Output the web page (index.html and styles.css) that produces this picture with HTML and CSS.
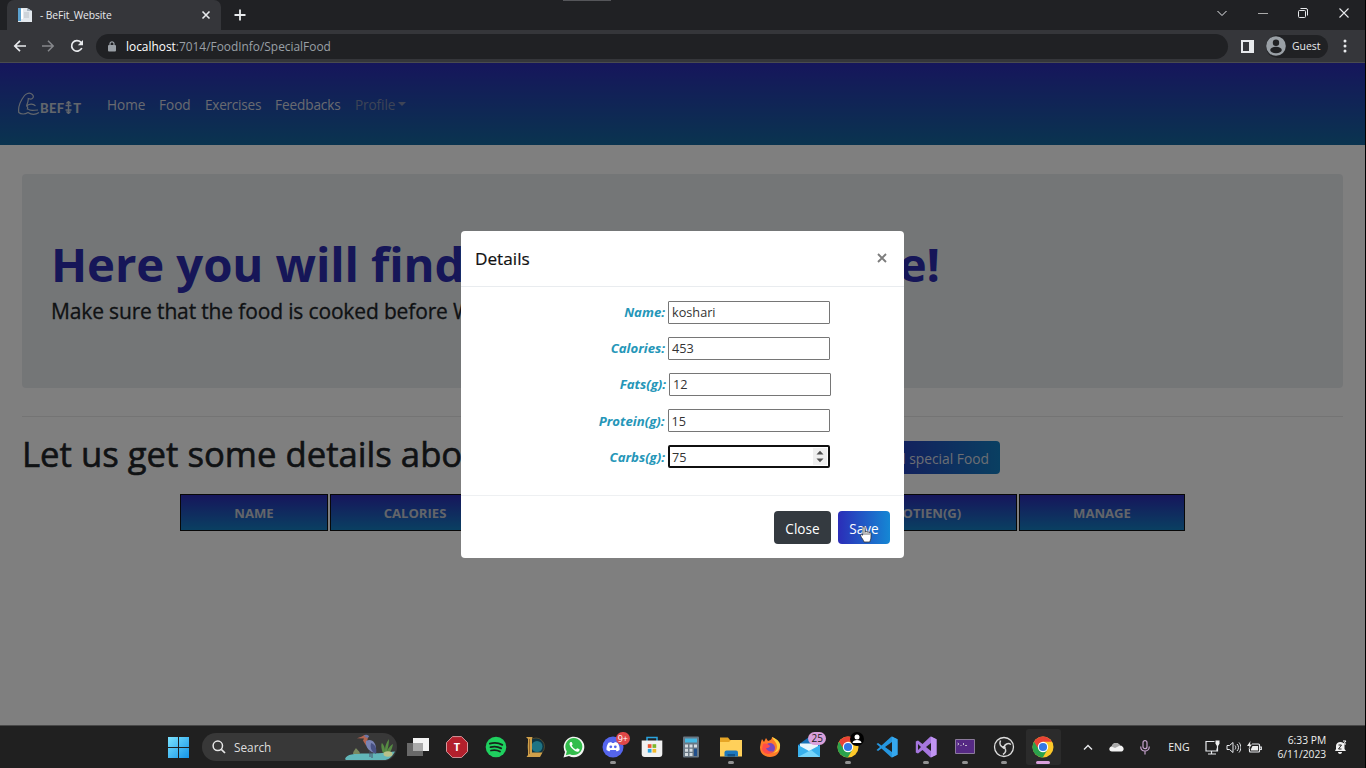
FILE: index.html
```html
<!DOCTYPE html>
<html lang="en">
<head>
<meta charset="utf-8">
<title>- BeFit_Website</title>
<link rel="stylesheet" href="styles.css">
</head>
<body>
<div class="screen">
  <header class="browser">
    <div class="tabs">
      <div class="tab">
        <svg class="favicon" width="16" height="16" viewBox="0 0 16 16"><path d="M1 1h9l5 3v11H1z" fill="#e3e8ed"/><path d="M1 1h3v13H1z" fill="#5ba1cf"/><path d="M4 2h2v10H4z" fill="#fff"/><path d="M7 6h5M7 8h5M7 10h5" stroke="#b9c0c7"/><path d="M10 1v3h5z" fill="#a9b6c2"/></svg>
        <span class="tab-title">- BeFit_Website</span>
        <svg width="10" height="10" viewBox="0 0 10 10" class="ln"><path d="M1.500 1.500l7 7M8.500 1.500l-7 7" stroke-width="1.600"/></svg>
      </div>
      <svg class="newtab ln" width="12" height="12" viewBox="0 0 12 12"><path d="M6 .5v11M.5 6h11" stroke-width="1.800"/></svg>
      <i class="grip"></i>
      <div class="winctl">
        <svg class="ln" width="12" height="12" viewBox="0 0 12 12"><path d="M1.500 4L6 8.500 10.500 4" /></svg>
        <svg class="ln" width="12" height="12" viewBox="0 0 12 12"><path d="M1 6.500h10" stroke="#aaa"/></svg>
        <svg class="ln" width="12" height="12" viewBox="0 0 12 12"><rect x="1.500" y="3.500" width="7" height="7" rx="1"/><path d="M3.500 1.500H9a1.500 1.500 0 0 1 1.500 1.500v5.500"/></svg>
        <svg class="ln" width="12" height="12" viewBox="0 0 12 12"><path d="M1.500 1.500l9 9M10.500 1.500l-9 9" stroke-width="1.100"/></svg>
      </div>
    </div>
    <div class="toolbar">
      <svg class="ln back" width="14" height="14" viewBox="0 0 14 14"><path d="M13 7H2M7 1.800L1.800 7 7 12.200" stroke-width="1.700"/></svg>
      <svg class="ln fwd" width="14" height="14" viewBox="0 0 14 14"><path d="M1 7h11M7 1.800L12.200 7 7 12.200" stroke-width="1.500"/></svg>
      <svg class="ln reload" width="14" height="14" viewBox="0 0 14 14"><path d="M11.800 9A5.300 5.300 0 1 1 10.800 3.200L12 4.500" stroke-width="1.700"/><path d="M13 1v5.200H7.800z" fill="#e8eaed" stroke="none"/></svg>
      <div class="omnibox">
        <svg width="8" height="11" viewBox="0 0 8 11"><rect y="4" width="8" height="6.500" rx="1" fill="#9aa0a6"/><path d="M2 4V2.800a2 2 0 0 1 4 0V4" fill="none" stroke="#9aa0a6" stroke-width="1.200"/></svg>
        <span class="url"><b>localhost</b>:7014/FoodInfo/SpecialFood</span>
      </div>
      <svg class="side" width="13" height="13" viewBox="0 0 13 13"><path d="M1 1h11v11H1z" fill="none" stroke="#e8eaed" stroke-width="2"/><path d="M8 1h4v11H8z" fill="#e8eaed"/></svg>
      <div class="guest">
        <svg width="20" height="20" viewBox="0 0 20 20"><circle cx="10" cy="10" r="9.800" fill="#9aa0a6"/><circle cx="10" cy="6.700" r="3.200" fill="#202124"/><ellipse cx="10" cy="14" rx="5.800" ry="3.200" fill="#202124"/></svg>
        <span>Guest</span>
      </div>
      <svg class="dots" width="4" height="14" viewBox="0 0 4 14" fill="#e8eaed"><circle cx="2" cy="2" r="1.500"/><circle cx="2" cy="7" r="1.500"/><circle cx="2" cy="12" r="1.500"/></svg>
    </div>
  </header>

  <main class="page">
    <nav class="navbar">
      <div class="brand">
        <svg width="24" height="24" viewBox="0 0 24 24"><path d="M21 20.500C17 23 13 22.500 10 20.500 7 22.500 3 22.500 .8 20.500 0 15 3 8 6.500 3.500 8 1.500 11 .7 12.800 1.500 15 2.500 16 4.500 14.800 6 13.500 8 12 7 10.300 6.500 10.500 9 9.500 11.500 8.500 14M8.500 14.500C10.500 11.500 15.500 11.500 17.500 14M10 17C12 19.500 16 18 20 18M8.500 14c1.500 1 1.500 2 .5 3.500" fill="none" stroke="#c4ccd8" stroke-width="1.200"/></svg>
        <span class="brand-name">BEF<svg width="7" height="13" viewBox="0 0 7 13"><path d="M3.500 0v13M.5 4.500h6M.5 9h6M1.500 2.500l2-2 2 2M1.500 10.500l2 2 2-2" fill="none" stroke="#c4ccd8" stroke-width="1.400"/></svg>T</span>
      </div>
      <a class="n1">Home</a><a class="n2">Food</a><a class="n3">Exercises</a><a class="n4">Feedbacks</a><a class="n5 muted">Profile<i class="caret"></i></a>
    </nav>
    <section class="jumbotron">
      <h1><span>Here you will find</span><span>here!</span></h1>
      <p>Make sure that the food is cooked before Weighing</p>
    </section>
    <hr>
    <div class="title-row">
      <h2>Let us get some details about</h2>
      <a class="btn add"><span>Add special Food</span></a>
    </div>
    <div class="thead">
      <div>NAME</div><div>CALORIES</div><div>FATS(G)</div><div>CARBS(G)</div><div>PROTIEN(G)</div><div>MANAGE</div>
    </div>
    <div class="backdrop">
      <div class="modal">
        <div class="modal-head"><span>Details</span>
          <svg width="10" height="10" viewBox="0 0 10 10"><path d="M1 1l8 8M9 1L1 9" stroke="#7d7d7d" stroke-width="1.900"/></svg>
        </div>
        <div class="modal-body">
          <div class="field"><label>Name:</label><div class="input">koshari</div></div>
          <div class="field"><label>Calories:</label><div class="input">453</div></div>
          <div class="field f3"><label>Fats(g):</label><div class="input">12</div></div>
          <div class="field f4"><label>Protein(g):</label><div class="input">15</div></div>
          <div class="field"><label>Carbs(g):</label><div class="input focus">75
            <svg width="14" height="17" viewBox="0 0 14 17"><rect width="14" height="17" fill="#efefef"/><path d="M3.500 6.500L7 2.700l3.500 3.800zM3.500 10.500L7 14.300l3.500-3.800z" fill="#505050"/></svg></div></div>
        </div>
        <div class="modal-foot">
          <a class="btn close">Close</a>
          <a class="btn save">Save
            <svg class="cursor" width="12" height="17" viewBox="0 0 12 17"><path d="M3 9V1.700C3 .3 5 .3 5 1.700V6c.5-1 2-.8 2 .2.600-.8 2-.5 2 .6.800-.6 2-.2 2 1V11c0 3-1 3.500-1.200 5H4C3.600 14 1.500 12 .7 10 .2 8.600 1.700 8 2.300 9z" fill="#fff" stroke="#333" stroke-width=".8"/><path d="M5 6v3M7 6.500V9M9 7v2" stroke="#333" stroke-width=".7"/></svg>
          </a>
        </div>
      </div>
    </div>
  </main>

  <footer class="taskbar">
    <svg class="start" width="21" height="21" viewBox="0 0 21 21"><defs><linearGradient id="w" x2="1" y2="1"><stop stop-color="#7be3ff"/><stop offset="1" stop-color="#1494e8"/></linearGradient></defs><path d="M0 0h10v10H0zM11 0h10v10H11zM0 11h10v10H0zM11 11h10v10H11z" fill="url(#w)"/></svg>
    <div class="search">
      <svg width="14" height="14" viewBox="0 0 14 14"><circle cx="5.800" cy="5.800" r="4.700" fill="none" stroke="#e6e6e6" stroke-width="1.500"/><path d="M9.300 9.300L13 13" stroke="#e6e6e6" stroke-width="1.700"/></svg>
      <span>Search</span>
      <svg class="heron" width="52" height="26" viewBox="0 0 52 26"><path d="M0 25C2 20 9 19.500 20 19.500c14 0 22-1 30-2-3 6-7 8.500-11 8.500H1z" fill="#62b7b9"/><path d="M17 2.500c2-2.500 6-2 6 1l-1 4 2 2-3 2-3-5 1-2-7-.2z" fill="#b26450"/><path d="M19 2c1-2 5-1.500 5 1l-2 1z" fill="#6c76a6"/><path d="M21 7c6-3 10 2 10 8 0 2 0 3-1 4-5-1-10-5-9-12z" fill="#7a83b4"/><path d="M26 9c5 2 6 6 5 11l-3-2c-2-2-3-5-2-9z" fill="#485184"/><path d="M27 18v6M25 17v6" stroke="#46506a"/><path d="M38 19C36 14 36 10 37 9c2 2 3 5 3 8 0-6 2-9 4-12 0 5-1 9-2 12 2-4 4-6 6-7-1 6-3 8-4 10z" fill="#568b43"/><ellipse cx="43" cy="20" rx="4.500" ry="2.800" fill="#b8c18a"/><path d="M8 20c0-3 2-4 3-6 1 2 4 3 4 6z" fill="#79885e"/></svg>
    </div>
    <div class="apps">
      <div class="app"><svg viewBox="0 0 22 22"><rect x="6" y="2" width="16" height="13" fill="#f4f4f4"/><rect y="7" width="16" height="13" fill="#777" opacity=".85"/><rect x="6" y="7" width="10" height="8" fill="#aaa"/></svg></div>
      <div class="app"><svg viewBox="0 0 22 22"><path d="M6.500.6h9l6 6v9l-6 6h-9l-6-6v-9z" fill="#b3202c" stroke="#d5989d"/></svg><b class="t">T</b></div>
      <div class="app"><svg viewBox="0 0 22 22"><circle cx="11" cy="11" r="10.300" fill="#1fd05f"/><path d="M4.800 7.700c4-1.200 9-.8 12.500 1.200M5.500 11.200c3.500-1 7.500-.6 10.700 1.200M6 14.500c3-.8 6.500-.4 9 1.100" fill="none" stroke="#17231b" stroke-width="1.800" stroke-linecap="round"/></svg></div>
      <div class="app"><svg viewBox="0 0 22 22"><circle cx="12" cy="10.500" r="8.500" fill="#0f3442" stroke="#5d512f" stroke-width=".8"/><circle cx="13" cy="10.500" r="5.500" fill="#1f7484"/><path d="M2 1h6.500L8 3v13.500h10.500L16 21H2.500L4 19V3z" fill="#d0a04a"/><path d="M5.500 3v15" stroke="#94682b"/></svg></div>
      <div class="app"><svg viewBox="0 0 22 22"><path d="M.5 21.500L2 16A10.300 10.300 0 1 1 6 20z" fill="#f2f5f2"/><path d="M2.800 19.200l1-3.800A8.500 8.500 0 1 1 7 18.200z" fill="#33bd4c"/><path d="M7.600 6c-2 1.500-1 4 1.800 6.800s5 3.600 6.500 2.400c1-1 .8-1.700.2-2.100l-2-.9-1.200 1.200c-1.800-.7-3.300-2-4.200-4l1-1.200-1-2.200z" fill="#fff"/></svg></div>
      <div class="app run"><svg viewBox="0 0 22 22"><circle cx="11" cy="11" r="10.500" fill="#5565ed"/><path d="M6.500 6.800l2.800-.8.600 1h2.300l.6-1 2.800.8c1.500 2.300 2.200 4.800 2 7.200l-2.800 1.600-1-1.500H8.300l-1 1.500L4.500 14c-.2-2.400.5-4.900 2-7.200z" fill="#fff"/><circle cx="8.800" cy="10.800" r="1.400" fill="#5565ed"/><circle cx="13.300" cy="10.800" r="1.400" fill="#5565ed"/></svg><span class="badge red">9+</span></div>
      <div class="app"><svg viewBox="0 0 22 22"><path d="M6 5V1.500h10V5" fill="none" stroke="#2aa4df" stroke-width="1.500"/><path d="M.7 4.500h20.600V18a3 3 0 0 1-3 3H3.700a3 3 0 0 1-3-3z" fill="#f1f1f1"/><path d="M6.800 8.200h3.700v3.700H6.800z" fill="#ef5530"/><path d="M11.500 8.200h3.700v3.700h-3.700z" fill="#7cb82b"/><path d="M6.800 12.900h3.700v3.700H6.800z" fill="#28a3e0"/><path d="M11.500 12.900h3.700v3.700h-3.700z" fill="#f5b928"/></svg></div>
      <div class="app"><svg viewBox="0 0 22 22"><rect x="3" y=".5" width="16" height="21" rx="1" fill="#697783"/><path d="M5 2.500h12v4H5z" fill="#45b8e2"/><path d="M5 8.500h3v3H5zM9.500 8.500h3v3h-3zM14 8.500h3v3h-3zM5 12.700h3v3H5zM9.500 12.700h3v3h-3zM5 17h3v3H5zM9.500 17h3v3h-3z" fill="#d5dce1"/><path d="M14 12.700h3V20h-3z" fill="#214f8b"/></svg></div>
      <div class="app run"><svg viewBox="0 0 22 22"><path d="M0 1.500h8l2 2.500h12v15H0z" fill="#e6a526"/><path d="M0 6h9l2-2h11v16.500H0z" fill="#ffd05a"/><path d="M4.500 20.500v-4a2 2 0 0 1 2-2H16a2 2 0 0 1 2 2v4z" fill="#1c78bd"/><path d="M7.500 18h7.500v2.500H7.500z" fill="#115288"/></svg></div>
      <div class="app"><svg viewBox="0 0 22 22"><path d="M2 6l1-3 2 3 2-4 2 3c3-1 4-2 4-4 4 2 7 5 8 10 0 6-4 10-10 10S.8 17 1 11z" fill="#ff7a29"/><path d="M13 1c1 3 5 5 5 10 0 3-2 5-4 6 8-1 8-9 6-11-1-2-4-4-7-5z" fill="#ffcf3e"/><circle cx="11" cy="12" r="5" fill="#7948bd"/><path d="M4 8c3-1 5 0 7 2-1 2-3 2-4 2 1 3 4 4 7 3-3 5-10 3-11-2z" fill="#ff4c49"/></svg></div>
      <div class="app"><svg viewBox="0 0 22 22"><path d="M0 9L11 1l11 8v12H0z" fill="#1670b5"/><path d="M2 7.500h18V14l-9 3-9-3z" fill="#e8f5fb"/><path d="M0 9l11 6 11-6v12H0z" fill="#38b0ec"/><path d="M0 21l13-7 9 7z" fill="#75d4fa"/></svg><span class="badge pink">25</span></div>
      <div class="app run"><svg viewBox="0 0 22 22"><use href="#chrome"/></svg><span class="badge user"><svg viewBox="0 0 14 14"><circle cx="7" cy="5" r="2.500" fill="#fff"/><path d="M2.500 11c0-4 9-4 9 0z" fill="#fff"/></svg></span></div>
      <div class="app"><svg viewBox="0 0 22 22"><path d="M15.500.5L5.500 9.600 2 7 .5 8 4 11 .5 14 2 15l3.500-2.600 10 9.100 6-2.700V3.200zM16 6v10l-7-5z" fill="#2596df" fill-rule="evenodd"/><path d="M16 .6l5.500 2.600v15.600L16 21.400z" fill="#35a8ef"/></svg></div>
      <div class="app run"><svg viewBox="0 0 22 22"><path d="M15.500.5L7.500 8 3 4.500.8 5.500v11l2.200 1L7.500 14l8 7.500 6-2.700V3.200zM3 8l3 3-3 3zM16 7v8l-5-4z" fill="#a677df" fill-rule="evenodd"/><path d="M16 .6l5.500 2.600v15.600L16 21.400z" fill="#c094f1"/></svg></div>
      <div class="app run"><svg viewBox="0 0 22 22"><path d="M1.500 3.500h19v14h-19z" fill="#552984" stroke="#8b7a9b"/><path d="M3.500 7l1.500 1-1.500 1M6.500 9.500h1M9 7l1 1-1 1M11 9.500h2" stroke="#ddd" fill="none" stroke-width=".8"/></svg></div>
      <div class="app run"><svg viewBox="0 0 22 22"><circle cx="11" cy="11" r="9.500" fill="#262626" stroke="#dedede" stroke-width="1.300"/><path d="M11 11.500C7.500 11 6 8 7.500 4.500M11 11.500c.5-3.500 4-5 7-3M11 11.500c2.800 2 2 5.500-1 7" fill="none" stroke="#d7d7d7" stroke-width="1.500"/><circle cx="11" cy="11.300" r="1.600" fill="#ddd"/></svg></div>
      <div class="app active"><svg viewBox="0 0 22 22"><g id="chrome"><circle cx="11" cy="11" r="10.500" fill="#fdc829"/><path d="M1.900 5.800A10.500 10.500 0 0 0 10.800 21.500L15.500 13.600 11 11z" fill="#2ba24c"/><path d="M2 5.600A10.500 10.500 0 0 1 20 5.800h-9L7 9l-1.500 2.500z" fill="#e94335"/><circle cx="11" cy="11" r="5.200" fill="#fff"/><circle cx="11" cy="11" r="4.100" fill="#3478e5"/></g></svg></div>
    </div>
    <div class="tray">
      <svg class="ln" width="10" height="7" viewBox="0 0 10 7"><path d="M1 5.500l4-4 4 4" stroke-width="1.400"/></svg>
      <svg class="cloud" width="15" height="10" viewBox="0 0 15 10"><path d="M3 9.500C-.5 9.500-.5 5 2.500 4.500 4 0 9.500 0 11 3.500c4 0 5 5.500 1.500 6z" fill="#f3f3f3"/><path d="M2.500 4.500C4 0 9.500 0 11 3.500L6 6z" fill="#aaa"/></svg>
      <svg class="mic" width="10" height="15" viewBox="0 0 10 15"><rect x="3" y=".7" width="4" height="8" rx="2" fill="none" stroke="#c7a3ce" stroke-width="1.200"/><path d="M.7 6.500c0 6 8.600 6 8.600 0M5 11v3.500" fill="none" stroke="#c7a3ce" stroke-width="1.200"/></svg>
      <span class="lang">ENG</span>
      <svg class="ln net" width="15" height="15" viewBox="0 0 15 15"><path d="M9.500 1.500H1v9.500h11V8.500M3 14h8M6.500 11v3M12.500 5v6.500" stroke-width="1.200"/><path d="M10.500 .5h4v3l-1 2h-2l-1-2z" fill="#eee" stroke="none"/></svg>
      <svg class="ln vol" width="15" height="13" viewBox="0 0 15 13"><path d="M1 4.500h2.500L7 1.500v10l-3.500-3H1zM9 4.500c1 1 1 3 0 4M11 3c2 2 2 5 0 7M13 1.500c2.500 3 2.500 7 0 10"/></svg>
      <svg class="ln bat" width="15" height="13" viewBox="0 0 15 13"><path d="M5 3h6.500a1 1 0 0 1 1 1v6a1 1 0 0 1-1 1h-8a1 1 0 0 1-1-1V7.500M13 6h1.300v2.500H13" stroke-width="1.200"/><path d="M5.500 5H11v4.500H4V8z" fill="#eee" stroke="none"/><path d="M3.500 0L0 5h2.500L1.500 8 5 3.500H3z" fill="#eee" stroke="none"/></svg>
      <div class="clock"><span class="time">6:33 PM</span><span class="date">6/11/2023</span></div>
      <svg class="bell" width="13" height="15" viewBox="0 0 13 15"><path d="M1 11l1-2V6c0-5 8-5 8.500-1v4L12 11zM4 12h4c0 2.500-4 2.500-4 0z" fill="#f1f1f1"/><path d="M4.500 5h3l-3 4h3" fill="none" stroke="#222"/><path d="M9 1h3L9.500 4H12" fill="none" stroke="#fff"/></svg>
    </div>
  </footer>
</div>
</body>
</html>
```
FILE: styles.css
```css
* { box-sizing: border-box; }
body { margin: 0; background: #000; font-family: "Open Sans", "Noto Sans", sans-serif; }
.screen { width: 1366px; height: 768px; overflow: hidden; display: flex; flex-direction: column; position: relative; }
svg { display: block; flex: none; }
.ln { fill: none; stroke: #e8eaed; stroke-width: 1; }

.browser { height: 63px; width: 1365px; background: #35363a; border-bottom: 1px solid #4a4b4e; }
.tabs { height: 30px; background: #202124; display: flex; align-items: center; padding-left: 7px; position: relative; }
.tab { width: 214px; height: 30px; background: #35363a; border-radius: 7px 7px 0 0; display: flex; align-items: center; padding: 0 10px; }
.tab-title { flex: 1; margin-left: 7px; font-size: 10.300px; letter-spacing: -.1px; color: #e8eaed; white-space: nowrap; }
.newtab { margin-left: 13px; }
.grip { position: absolute; left: 563px; top: 0; width: 48px; height: 1px; background: #55565a; }
.winctl { margin-left: auto; display: flex; gap: 28.600px; padding-right: 15px; padding-bottom: 4px; }
.toolbar { height: 32px; display: flex; align-items: center; padding-left: 12.500px; }
.fwd { margin-left: 14px; stroke: #86888c; }
.reload { margin-left: 15px; }
.omnibox { margin-left: 12.500px; width: 1132px; height: 25px; border-radius: 13px; background: #202124; display: flex; align-items: center; padding-left: 12px; }
.url { margin-left: 10px; font-size: 11.900px; color: #9aa0a6; line-height: 24px; }
.url b { font-weight: 400; color: #fff; }
.side { margin-left: 13px; }
.guest { margin-left: 12px; width: 62px; height: 23px; border-radius: 12px; background: #202124; display: flex; align-items: center; font-size: 10.400px; color: #e8eaed; }
.guest span { margin-left: 6px; }
.dots { margin-left: 15px; }

.page { height: 662px; width: 1365px; background: #fff; position: relative; color: #212529; }
.navbar { height: 82px; background: linear-gradient(#2c2cb8, #14689f); display: flex; align-items: center; padding-left: 18px; font-size: 13.600px; color: #d2d5e0; }
.brand { display: flex; align-items: center; width: 89px; }
.brand-name { display: flex; align-items: center; gap: 1px; font: 900 13px/14px Lato, sans-serif; color: #c4ccd8; margin: 7px 0 0 -2px; letter-spacing: .3px; }
.n1 { width: 52px; } .n2 { width: 46px; } .n3 { width: 70px; letter-spacing: -.25px; } .n4 { width: 80px; letter-spacing: -.1px; }
.muted { color: #7c88ac; display: flex; align-items: center; letter-spacing: -.1px; }
.caret { border: 4px solid transparent; border-top-color: currentColor; border-bottom: 0; margin-left: 3px; }
.jumbotron { margin: 29px 22px 0; height: 214px; background: #e9ecef; border-radius: 4px; padding: 58px 29px 0; }
h1 { margin: 0; width: 889px; display: flex; justify-content: space-between; font-size: 47.300px; letter-spacing: -.1px; line-height: 63px; font-weight: 700; color: #2c2cb0; white-space: nowrap; }
.jumbotron p { margin: 0; font-size: 21px; letter-spacing: -.15px; line-height: 32px; color: #212529; -webkit-text-stroke: .3px #212529; white-space: nowrap; }
hr { margin: 28px 22px 0; border: 0; border-top: 1px solid #e8e8e8; }
.title-row { display: flex; align-items: flex-start; padding: 10px 0 0 22px; }
h2 { margin: 0; width: 844px; font-size: 34.700px; font-weight: 400; -webkit-text-stroke: .6px #212529; line-height: 54px; white-space: nowrap; }
.btn { display: flex; align-items: center; justify-content: center; height: 34px; border-radius: 4px; color: #fff; font-size: 13.600px; position: relative; }
.add { width: 134px; margin-top: 14px; height: 33px; color: #d8dce6; font-size: 13.800px; background: linear-gradient(90deg, #2c2cb8, #137fc4); }
.add span { margin: 1px 0 0 3px; }
.thead { display: grid; grid-template-columns: 148px 170px 162px 162px 187px 166px; gap: 2px; margin: 13px 0 0 180px; }
.thead div { height: 37px; border: 1px solid #111; background: linear-gradient(#2c2cb8, #1480c4); color: #c6cbd4; font-weight: 700; font-size: 13.100px; line-height: 37px; text-align: center; }

.backdrop { position: absolute; inset: 0; background: rgba(0, 0, 0, .5); display: flex; align-items: flex-start; justify-content: center; padding-top: 168px; }
.modal { width: 443px; height: 327px; background: #fff; border-radius: 4px; color: #111; }
.modal-head { height: 56px; border-bottom: 1px solid #e9ecef; display: flex; align-items: center; justify-content: space-between; padding: 0 17px 0 14px; font-size: 17.200px; -webkit-text-stroke: .2px #111; }
.modal-head svg { margin-bottom: 2px; }
.modal-body { height: 209px; padding-top: 13px; display: flex; flex-direction: column; gap: 12.200px; border-bottom: 1px solid #eef0f2; }
.field { display: flex; width: 369px; justify-content: flex-end; align-items: center; height: 24px; }
.f3 { width: 370px; } .f4 { width: 368.500px; }
.field label { color: #2596b8; font-weight: 700; font-style: italic; font-size: 13.200px; margin-right: 3px; }
.input { width: 162px; height: 23px; border: 1px solid #767676; border-radius: 1px; font-size: 12.700px; color: #333; padding-left: 3px; display: flex; align-items: center; justify-content: space-between; }
.focus { border: 2px solid #101010; border-radius: 2px; padding: 0 1px 0 2px; }
.modal-foot { display: flex; justify-content: flex-end; gap: 7px; padding: 15px 14px 0; }
.modal-foot .btn { height: 33px; padding-top: 1px; }
.close { width: 57px; background: #343a40; }
.save { width: 52px; background: linear-gradient(90deg, #2b2db8, #1587d4); }
.cursor { position: absolute; left: 22px; top: 15px; }

.taskbar { height: 43px; width: 1365px; background: #202020; border-top: 1px solid #484848; display: flex; align-items: center; padding-left: 168px; }
.search { margin-left: 13px; width: 195px; height: 28px; border-radius: 14px; background: #383838; display: flex; align-items: center; padding-left: 10px; color: #dedede; font-size: 11.800px; overflow: hidden; }
.search span { margin-left: 8px; flex: 1; }
.apps { display: flex; margin-left: 1.400px; }
.app { width: 39.090px; height: 42px; position: relative; display: flex; justify-content: center; align-items: center; }
.app > svg { width: 22px; height: 22px; position: relative; }
.run::after, .active::after { content: ""; position: absolute; bottom: 4px; width: 6px; height: 3px; border-radius: 2px; background: #929292; }
.active::before { content: ""; position: absolute; inset: 3px 2px 3px; background: #2b2b2b; border-radius: 3px; }
.active::after { width: 14px; background: #d9a0dc; }
.t { position: absolute; color: #fff; font: 700 11px/22px "Open Sans", sans-serif; }
.badge { position: absolute; top: 6px; left: 22px; width: 14px; height: 13px; border-radius: 8px; color: #fff; background: #e04848; font-size: 9px; line-height: 13px; text-align: center; }
.pink { width: 18px; left: 19px; background: #d9a0dc; color: #222; font-size: 10px; }
.user { background: #000; height: 14px; }
.tray { flex: 1; display: flex; align-items: center; color: #eee; padding-left: 20.500px; }
.cloud { margin-left: 16px; } .mic { margin-left: 16px; }
.lang { margin-left: 18px; width: 37px; font-size: 10.500px; }
.vol { margin-left: 6px; } .bat { margin-left: 6px; }
.clock { width: 64px; display: flex; flex-direction: column; align-items: flex-end; font-size: 10.300px; line-height: 14px; padding-bottom: 1px; }
.bell { margin-left: 7.500px; }
```
